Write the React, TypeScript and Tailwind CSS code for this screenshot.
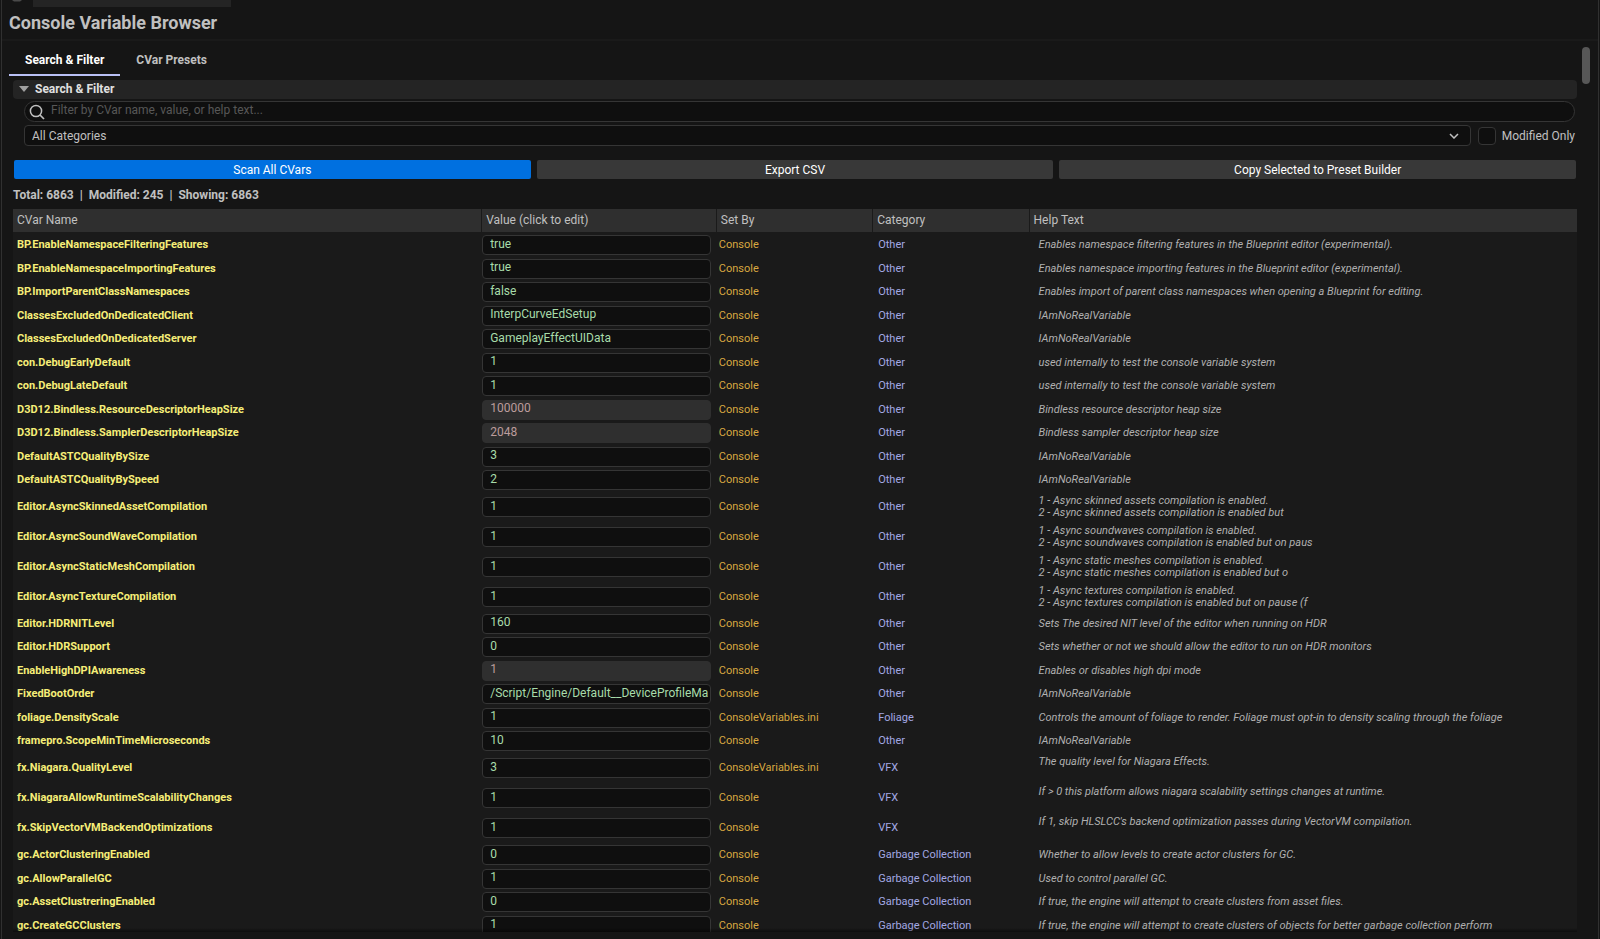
import React, { useState } from "react";

interface CVar {
  name: string;
  value: string;
  help: string;
  setBy?: string;
  category?: string;
  readOnly?: boolean;
}

// Help strings keep their line breaks, a trailing one still takes up a line.
const cvars: CVar[] = [
  { name: "BP.EnableNamespaceFilteringFeatures", value: "true", help: "Enables namespace filtering features in the Blueprint editor (experimental)." },
  { name: "BP.EnableNamespaceImportingFeatures", value: "true", help: "Enables namespace importing features in the Blueprint editor (experimental)." },
  { name: "BP.ImportParentClassNamespaces", value: "false", help: "Enables import of parent class namespaces when opening a Blueprint for editing." },
  { name: "ClassesExcludedOnDedicatedClient", value: "InterpCurveEdSetup", help: "IAmNoRealVariable" },
  { name: "ClassesExcludedOnDedicatedServer", value: "GameplayEffectUIData", help: "IAmNoRealVariable" },
  { name: "con.DebugEarlyDefault", value: "1", help: "used internally to test the console variable system" },
  { name: "con.DebugLateDefault", value: "1", help: "used internally to test the console variable system" },
  { name: "D3D12.Bindless.ResourceDescriptorHeapSize", value: "100000", help: "Bindless resource descriptor heap size", readOnly: true },
  { name: "D3D12.Bindless.SamplerDescriptorHeapSize", value: "2048", help: "Bindless sampler descriptor heap size", readOnly: true },
  { name: "DefaultASTCQualityBySize", value: "3", help: "IAmNoRealVariable" },
  { name: "DefaultASTCQualityBySpeed", value: "2", help: "IAmNoRealVariable" },
  { name: "Editor.AsyncSkinnedAssetCompilation", value: "1", help: "1 - Async skinned assets compilation is enabled.\n2 - Async skinned assets compilation is enabled but" },
  { name: "Editor.AsyncSoundWaveCompilation", value: "1", help: "1 - Async soundwaves compilation is enabled.\n2 - Async soundwaves compilation is enabled but on paus" },
  { name: "Editor.AsyncStaticMeshCompilation", value: "1", help: "1 - Async static meshes compilation is enabled.\n2 - Async static meshes compilation is enabled but o" },
  { name: "Editor.AsyncTextureCompilation", value: "1", help: "1 - Async textures compilation is enabled.\n2 - Async textures compilation is enabled but on pause (f" },
  { name: "Editor.HDRNITLevel", value: "160", help: "Sets The desired NIT level of the editor when running on HDR" },
  { name: "Editor.HDRSupport", value: "0", help: "Sets whether or not we should allow the editor to run on HDR monitors" },
  { name: "EnableHighDPIAwareness", value: "1", help: "Enables or disables high dpi mode", readOnly: true },
  { name: "FixedBootOrder", value: "/Script/Engine/Default__DeviceProfileMa", help: "IAmNoRealVariable" },
  { name: "foliage.DensityScale", value: "1", help: "Controls the amount of foliage to render. Foliage must opt-in to density scaling through the foliage", setBy: "ConsoleVariables.ini", category: "Foliage" },
  { name: "framepro.ScopeMinTimeMicroseconds", value: "10", help: "IAmNoRealVariable" },
  { name: "fx.Niagara.QualityLevel", value: "3", help: "The quality level for Niagara Effects.\n", setBy: "ConsoleVariables.ini", category: "VFX" },
  { name: "fx.NiagaraAllowRuntimeScalabilityChanges", value: "1", help: "If > 0 this platform allows niagara scalability settings changes at runtime.\n", category: "VFX" },
  { name: "fx.SkipVectorVMBackendOptimizations", value: "1", help: "If 1, skip HLSLCC's backend optimization passes during VectorVM compilation.\n", category: "VFX" },
  { name: "gc.ActorClusteringEnabled", value: "0", help: "Whether to allow levels to create actor clusters for GC.", category: "Garbage Collection" },
  { name: "gc.AllowParallelGC", value: "1", help: "Used to control parallel GC.", category: "Garbage Collection" },
  { name: "gc.AssetClustreringEnabled", value: "0", help: "If true, the engine will attempt to create clusters from asset files.", category: "Garbage Collection" },
  { name: "gc.CreateGCClusters", value: "1", help: "If true, the engine will attempt to create clusters of objects for better garbage collection perform", category: "Garbage Collection" },
];

const columns = [
  { label: "CVar Name", width: "w-[30%]" },
  { label: "Value (click to edit)", width: "w-[15%]" },
  { label: "Set By", width: "w-[10%]" },
  { label: "Category", width: "w-[10%]" },
  { label: "Help Text", width: "w-[35%]" },
];

export default function App() {
  return (
    <div className="h-screen overflow-hidden bg-[#151515] font-['Roboto',sans-serif] text-xs leading-4 text-[#c0c0c0]">
      <div className="mx-px flex h-full flex-col border-x border-[#303030]">
        <TopStrip />
        <h1 className="flex h-[34px] shrink-0 items-center border-b-2 border-[#1a1a1a] px-[7px] text-lg font-bold leading-6">
          Console Variable Browser
        </h1>
        <div className="flex min-h-0 flex-1 pb-[7px]">
          <main className="flex min-w-0 flex-1 flex-col overflow-hidden">
            <Tabs />
            <div className="flex min-h-0 flex-1 flex-col pl-[11px] pt-1">
              <FilterPanel />
              <Actions />
              <p className="mt-2 font-bold">
                Total: 6863 &nbsp;|&nbsp; Modified: 245 &nbsp;|&nbsp; Showing: 6863
              </p>
              <CVarTable />
            </div>
          </main>
          <div className="w-[21px] shrink-0 px-[5px] pt-1.5">
            <div className="h-[37px] w-2 rounded-full bg-[#575757]" />
          </div>
        </div>
      </div>
    </div>
  );
}

// Bottom edge of the editor tab well above the panel
const TopStrip = () => (
  <div className="flex h-[7px] shrink-0 items-start gap-[11px] pl-[10px]">
    <svg className="h-[2px] w-[10px]" viewBox="0 0 10 2">
      <path d="M0 0h10L8 1.6H2z" fill="#4a4a4a" />
    </svg>
    <div className="h-full w-[198px] bg-[#242424]" />
  </div>
);

const Tabs = () => (
  <div className="flex h-[35px] shrink-0 pl-[7px] font-bold">
    <button className="border-b-2 border-[#b9c0f5] px-4 pt-1 text-white">Search &amp; Filter</button>
    <button className="border-b-2 border-transparent px-4 pt-1 text-[#c0c0c0]">CVar Presets</button>
  </div>
);

// ----------------- Filters -----------------
const FilterPanel = () => (
  <section className="flex flex-col gap-0.5">
    <button className="flex h-[19px] items-center gap-1.5 rounded bg-[#242424] px-1.5 pb-px font-bold text-[#e0e0e0]">
      <svg className="h-[6px] w-[10px]" viewBox="0 0 10 6">
        <path d="M0 0h10L5 6z" fill="#a0a0a0" />
      </svg>
      Search &amp; Filter
    </button>

    <div className="flex flex-col gap-[3px] pl-[11px] pr-0.5">
      <label className="flex h-[21px] items-center gap-1.5 rounded-full border border-[#353535] bg-[#0f0f0f] pl-1">
        <svg className="h-4 w-4 text-[#c0c0c0]" viewBox="0 0 16 16" fill="none" stroke="currentColor">
          <circle cx="7" cy="7" r="5.6" strokeWidth="1.5" />
          <path d="M11 11l4 4" strokeWidth="1.7" />
        </svg>
        <input
          type="text"
          aria-label="Filter CVars"
          placeholder="Filter by CVar name, value, or help text..."
          className="min-w-0 flex-1 bg-transparent pb-[3px] outline-none placeholder:text-[#575757]"
        />
      </label>

      <div className="flex items-center gap-[7px]">
        <div className="relative flex-1">
          <select
            aria-label="Category"
            className="block h-[21px] w-full appearance-none rounded border border-[#353535] bg-[#0f0f0f] px-[7px]"
          >
            <option>All Categories</option>
          </select>
          <svg
            className="pointer-events-none absolute right-3 top-2 h-[6px] w-[10px]"
            viewBox="0 0 10 6"
            fill="none"
            stroke="#c0c0c0"
            strokeWidth="1.5"
          >
            <path d="M1 1l4 4 4-4" />
          </svg>
        </div>
        <label className="flex items-center gap-1.5">
          <input
            type="checkbox"
            className="h-[18px] w-[18px] appearance-none rounded border border-[#353535] bg-[#0f0f0f] checked:bg-[#0070e0]"
          />
          Modified Only
        </label>
      </div>
    </div>
  </section>
);

const Actions = () => (
  <div className="mt-3.5 grid h-[19px] grid-cols-3 gap-1.5 px-px text-white">
    <button className="rounded-xs bg-[#0070e0]">Scan All CVars</button>
    <button className="rounded-xs bg-[#383838]">Export CSV</button>
    <button className="rounded-xs bg-[#383838]">Copy Selected to Preset Builder</button>
  </div>
);

// ----------------- Table -----------------
const CVarTable = () => (
  <div className="relative mt-1.5 min-h-0 flex-1 overflow-hidden bg-[#1a1a1a]">
    <table className="w-full table-fixed border-separate border-spacing-0">
      <thead>
        <tr className="h-[23px] bg-[#2f2f2f] text-left">
          {columns.map((col) => (
            <th
              key={col.label}
              className={`${col.width} border-r border-[#1a1a1a] px-1 pb-0.5 pt-0 font-normal last:border-r-0`}
            >
              {col.label}
            </th>
          ))}
        </tr>
      </thead>
      <tbody>
        {cvars.map((cvar) => (
          <CVarRow key={cvar.name} cvar={cvar} />
        ))}
      </tbody>
    </table>
    {/* scroll shadow */}
    <div className="pointer-events-none absolute inset-x-0 bottom-0 h-1 bg-linear-to-b from-transparent to-black/50" />
  </div>
);

const CVarRow = ({ cvar }: { cvar: CVar }) => {
  const [value, setValue] = useState(cvar.value);
  const multiline = cvar.help.includes("\n");

  return (
    <tr className={multiline ? "h-[30px]" : "odd:h-6 even:h-[23px]"}>
      <td className="pb-0 pl-1 pt-0.5 text-[11px] font-bold text-[#f6ee78]">{cvar.name}</td>
      <td className="pb-0 pr-1.5 pt-0.5">
        <input
          type="text"
          aria-label={cvar.name}
          value={value}
          readOnly={cvar.readOnly}
          onChange={(e) => setValue(e.target.value)}
          className={`block h-5 w-full rounded border pb-[3px] pl-[7px] outline-none ${
            cvar.readOnly
              ? "border-[#2f2f2f] bg-[#2f2f2f] text-[#bc9c9c]"
              : "border-[#353535] bg-[#0f0f0f] text-[#a8dcaa]"
          }`}
        />
      </td>
      <td className="pb-0 pl-0.5 pt-0.5 text-[11px] text-[#d8a840]">{cvar.setBy ?? "Console"}</td>
      <td className="pb-0 pl-[5px] pt-0.5 text-[11px] text-[#a3a8e4]">{cvar.category ?? "Other"}</td>
      <td className="whitespace-pre pb-0 pl-[9px] pt-0.5 text-[11px] italic leading-3 text-[#b0b0b0]">
        {cvar.help.endsWith("\n") ? cvar.help + " " : cvar.help}
      </td>
    </tr>
  );
};
